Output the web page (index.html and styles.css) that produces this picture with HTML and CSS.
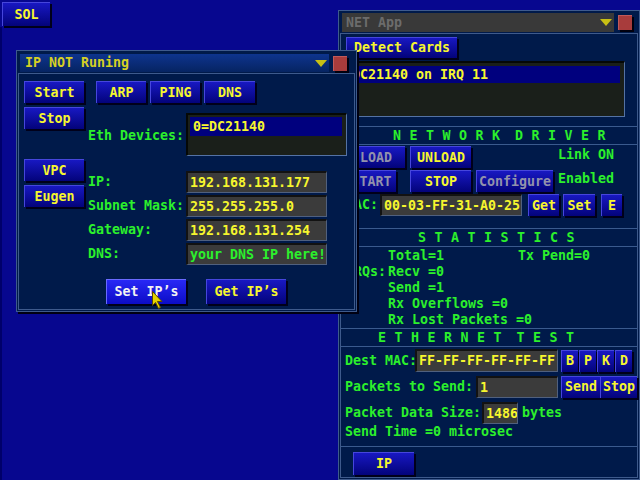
FILE: index.html
```html
<!DOCTYPE html>
<html lang="en">
<head>
<meta charset="UTF-8">
<meta name="viewport" content="width=device-width, initial-scale=1.0">
<title>SOL - NET App</title>
<link rel="stylesheet" href="styles.css">
</head>
<body>

<div class="edge"></div>
<button class="btn sol">SOL</button>

<div class="win net-win">
    <div class="win-head">
        <div class="title off">NET App<span class="tri"></span></div>
        <div class="close"></div>
    </div>
    <div class="win-body net-body">
        <button class="btn detect">Detect Cards</button>
        <div class="list cards">
            <div class="sel">DC21140 on IRQ 11</div>
        </div>

        <div class="sect sect-drv">NETWORK DRIVER</div>
        <div class="driver">
            <button class="btn dim">LOAD</button>
            <button class="btn">UNLOAD</button>
            <span></span>
            <span class="state">Link ON</span>
            <button class="btn dim w-start">START</button>
            <button class="btn">STOP</button>
            <button class="btn dim">Configure</button>
            <span class="state">Enabled</span>
        </div>
        <div class="mac-row">
            <span class="mac-lbl">MAC:</span>
            <div class="field mac-field">00-03-FF-31-A0-25</div>
            <button class="btn get">Get</button>
            <button class="btn set">Set</button>
            <button class="btn e">E</button>
        </div>

        <div class="sect sect-stat">STATISTICS</div>
        <div class="stats">
            <span></span><span>Total=1</span><span>Tx Pend=0</span>
            <span>IRQs:</span><span>Recv =0</span><span></span>
            <span></span><span>Send =1</span><span></span>
            <span></span><span class="wide">Rx Overflows =0</span>
            <span></span><span class="wide">Rx Lost Packets =0</span>
        </div>

        <div class="sect sect-eth">ETHERNET TEST</div>
        <div class="test-row first">
            <span class="t-lbl dest-lbl">Dest MAC:</span>
            <div class="field dest-field">FF-FF-FF-FF-FF-FF</div>
            <button class="btn key first-key">B</button>
            <button class="btn key">P</button>
            <button class="btn key">K</button>
            <button class="btn key">D</button>
        </div>
        <div class="test-row">
            <span class="t-lbl count-lbl">Packets to Send:</span>
            <div class="field count-field">1</div>
            <button class="btn send">Send</button>
            <button class="btn stop">Stop</button>
        </div>
        <div class="test-row">
            <span class="t-lbl size-lbl">Packet Data Size:</span>
            <div class="field size-field">1486</div>
            <span class="unit">bytes</span>
        </div>
        <div class="send-time">Send Time =0 microsec</div>
        <div class="rule"></div>
        <button class="btn ip-btn">IP</button>
    </div>
</div>

<div class="win ip-win">
    <div class="win-head">
        <div class="title">IP NOT Runing<span class="tri"></span></div>
        <div class="close"></div>
    </div>
    <div class="win-body ip-body">
        <div class="ip-main">
            <div class="side">
                <button class="btn side-btn">Start</button>
                <button class="btn side-btn">Stop</button>
                <button class="btn side-btn vpc">VPC</button>
                <button class="btn side-btn">Eugen</button>
            </div>
            <div class="ip-form">
                <div class="tabs">
                    <button class="btn tab">ARP</button>
                    <button class="btn tab">PING</button>
                    <button class="btn tab dns">DNS</button>
                </div>
                <div class="form-row eth-row">
                    <span class="lbl">Eth Devices:</span>
                    <div class="list devs"><div class="sel">0=DC21140</div></div>
                </div>
                <div class="fields">
                    <div class="form-row"><span class="lbl">IP:</span><div class="field ip-field">192.168.131.177</div></div>
                    <div class="form-row"><span class="lbl">Subnet Mask:</span><div class="field ip-field">255.255.255.0</div></div>
                    <div class="form-row"><span class="lbl">Gateway:</span><div class="field ip-field">192.168.131.254</div></div>
                    <div class="form-row"><span class="lbl">DNS:</span><div class="field ip-field hint">your DNS IP here!</div></div>
                </div>
            </div>
        </div>
        <div class="ip-actions">
            <button class="btn act hot">Set IP’s</button>
            <button class="btn act">Get IP’s</button>
        </div>
    </div>
</div>

<svg class="cursor" width="12" height="19" viewBox="0 0 12 19">
    <path d="M0.5 0.5 L0.5 14.5 L3.5 11.5 L6.5 17.5 L8.5 16.5 L5.5 10.5 L10 10.5 Z" fill="#e6d200" stroke="#5a4a00" stroke-width="1"/>
</svg>

</body>
</html>
```

FILE: styles.css
```css
* {
    box-sizing: border-box;
}
body {
    margin: 0;
    width: 640px;
    height: 480px;
    overflow: hidden;
    position: relative;
    background: #07078f;
    font: bold 13.3px/16px "DejaVu Sans Mono", monospace;
    color: #2cf02c;
}

/* buttons */
.btn {
    display: flex;
    align-items: center;
    justify-content: center;
    height: 22px;
    padding: 0;
    border: 0;
    border-top: 1px solid #4646dc;
    border-left: 1px solid #4646dc;
    background: linear-gradient(#1818c2, #03037a);
    box-shadow: 2px 2px 0 #00001a;
    color: #f6f62e;
    font: inherit;
    white-space: nowrap;
}
.btn.dim {
    color: #9292ac;
}
.btn.hot {
    background: linear-gradient(#2828f6, #0c0cc6);
    border-color: #6a6aff;
    color: #f2f2f2;
}
.sol {
    position: absolute;
    left: 2px;
    top: 2px;
    width: 48px;
    height: 24px;
}
.edge {
    position: absolute;
    left: 0;
    top: 27px;
    width: 2px;
    height: 453px;
    background: #00006a;
}

/* windows */
.win {
    position: absolute;
    display: flex;
    flex-direction: column;
    background: #001a4a;
    border: 1px solid #3e5a8c;
    box-shadow: 2px 2px 0 #000012;
}
.win-head {
    display: flex;
    align-items: center;
}
.title {
    flex: 1;
    display: flex;
    align-items: center;
    justify-content: space-between;
    padding: 0 2px 0 5px;
    background: linear-gradient(#0e348e, #062462);
    color: #d6d024;
}
.title.off {
    background: #393939;
    color: #6c6c6c;
}
.tri {
    width: 0;
    height: 0;
    border-left: 6px solid transparent;
    border-right: 6px solid transparent;
    border-top: 7px solid #c8c014;
}
.close {
    width: 14px;
    height: 15px;
    margin-left: 4px;
    background: #a83c3c;
    border-top: 1px solid #c05a5a;
    border-left: 1px solid #c05a5a;
    box-shadow: 2px 2px 0 #00000e;
}
.win-body {
    flex: 1;
    margin: 1px;
    border: 1px solid #3e5a8c;
}

/* list boxes and fields */
.list {
    background: #1a1f1a;
    border-top: 2px solid #050805;
    border-left: 2px solid #050805;
    border-right: 1px solid #5472a4;
    border-bottom: 1px solid #5472a4;
}
.sel {
    background: #00007e;
    color: #f6f62e;
    padding-left: 3px;
}
.field {
    height: 22px;
    background: #3b3b3b;
    border-top: 2px solid #121212;
    border-left: 2px solid #121212;
    border-right: 1px solid #50607e;
    border-bottom: 1px solid #50607e;
    padding-left: 2px;
    line-height: 19px;
    color: #f6f62e;
    white-space: nowrap;
    overflow: hidden;
}
.field.hint {
    color: #2cf02c;
}

/* IP window */
.ip-win {
    left: 16px;
    top: 50px;
    width: 341px;
    height: 262px;
    z-index: 2;
}
.ip-win .win-head {
    padding: 3px 9px 0 3px;
}
.ip-win .title {
    height: 18px;
}
.ip-body {
    padding: 7px 0 0 5px;
}
.ip-main {
    display: flex;
    gap: 4px;
}
.side {
    display: flex;
    flex-direction: column;
    gap: 4px;
}
.side-btn {
    width: 60px;
}
.side .vpc {
    margin-top: 26px;
}
.tabs {
    display: flex;
    gap: 4px;
    margin-left: 8px;
}
.tab {
    width: 50px;
}
.tab.dns {
    width: 51px;
}
.form-row {
    display: flex;
    align-items: center;
}
.lbl {
    width: 98px;
}
.eth-row {
    margin-top: 10px;
}
.eth-row .lbl {
    padding-top: 3px;
}
.devs {
    width: 161px;
    height: 43px;
    padding: 2px 4px 0 2px;
}
.devs .sel {
    line-height: 19px;
}
.fields {
    display: flex;
    flex-direction: column;
    gap: 2px;
    margin-top: 15px;
}
.ip-field {
    width: 141px;
}
.ip-actions {
    display: flex;
    gap: 20px;
    margin-top: 14px;
    padding-left: 82px;
}
.act {
    width: 80px;
    height: 25px;
}

/* NET window */
.net-win {
    left: 338px;
    top: 10px;
    width: 302px;
    height: 470px;
    z-index: 1;
}
.net-win .win-head {
    padding: 2px 7px 0 3px;
}
.net-win .title {
    height: 19px;
    padding-left: 4px;
}
.detect {
    width: 111px;
    height: 21px;
    margin: 3px 0 0 5px;
}
.cards {
    width: 279px;
    height: 56px;
    margin: 3px 0 0 5px;
    padding: 3px 4px 0 2px;
}
.cards .sel {
    line-height: 17px;
    padding-left: 2px;
}
.sect {
    height: 19px;
    border-top: 1px solid #3a5a8e;
    border-bottom: 1px solid #3a5a8e;
    line-height: 17px;
    letter-spacing: 8.5px;
    word-spacing: -10px;
    white-space: nowrap;
}
.sect-drv {
    margin-top: 9px;
    padding-left: 52px;
}
.sect-stat {
    margin-top: 12px;
    padding-left: 77px;
}
.sect-eth {
    padding-left: 37px;
}
.driver {
    display: grid;
    grid-template-columns: 59px 61px 77px auto;
    grid-auto-rows: 22px;
    column-gap: 5px;
    row-gap: 2px;
    margin: 1px 0 0 5px;
}
.driver .w-start {
    width: 50px;
}
.state {
    line-height: 18px;
}
.mac-row {
    display: flex;
    align-items: center;
    height: 22px;
    margin: 2px 0 0 5px;
}
.mac-lbl {
    width: 34px;
}
.mac-field {
    width: 142px;
}
.get {
    width: 31px;
    margin-left: 6px;
}
.set {
    width: 32px;
    margin-left: 4px;
}
.e {
    width: 21px;
    margin-left: 6px;
}
.stats {
    display: grid;
    grid-template-columns: 42px 130px auto;
    grid-auto-rows: 16px;
    padding: 1px 0 0 5px;
}
.stats .wide {
    grid-column: 2 / 4;
}
.test-row {
    display: flex;
    align-items: center;
    height: 23px;
    margin: 3px 0 0 4px;
}
.test-row.first {
    margin-top: 2px;
}
.t-lbl {
    white-space: nowrap;
}
.dest-lbl {
    width: 70px;
}
.dest-field {
    width: 143px;
    height: 23px;
    line-height: 20px;
}
.key {
    width: 17px;
    margin-left: 1px;
}
.key.first-key {
    margin-left: 3px;
}
.count-lbl {
    width: 131px;
}
.count-field {
    width: 82px;
}
.send {
    width: 39px;
    margin-left: 3px;
}
.stop {
    width: 37px;
}
.size-lbl {
    width: 137px;
}
.size-field {
    width: 36px;
}
.unit {
    margin-left: 4px;
}
.send-time {
    margin-left: 4px;
    line-height: 16px;
}
.rule {
    margin-top: 6px;
    border-top: 1px solid #3a5a8e;
}
.ip-btn {
    width: 61px;
    height: 23px;
    margin: 5px 0 0 12px;
}

.cursor {
    position: absolute;
    left: 152px;
    top: 291px;
    z-index: 3;
}
```
